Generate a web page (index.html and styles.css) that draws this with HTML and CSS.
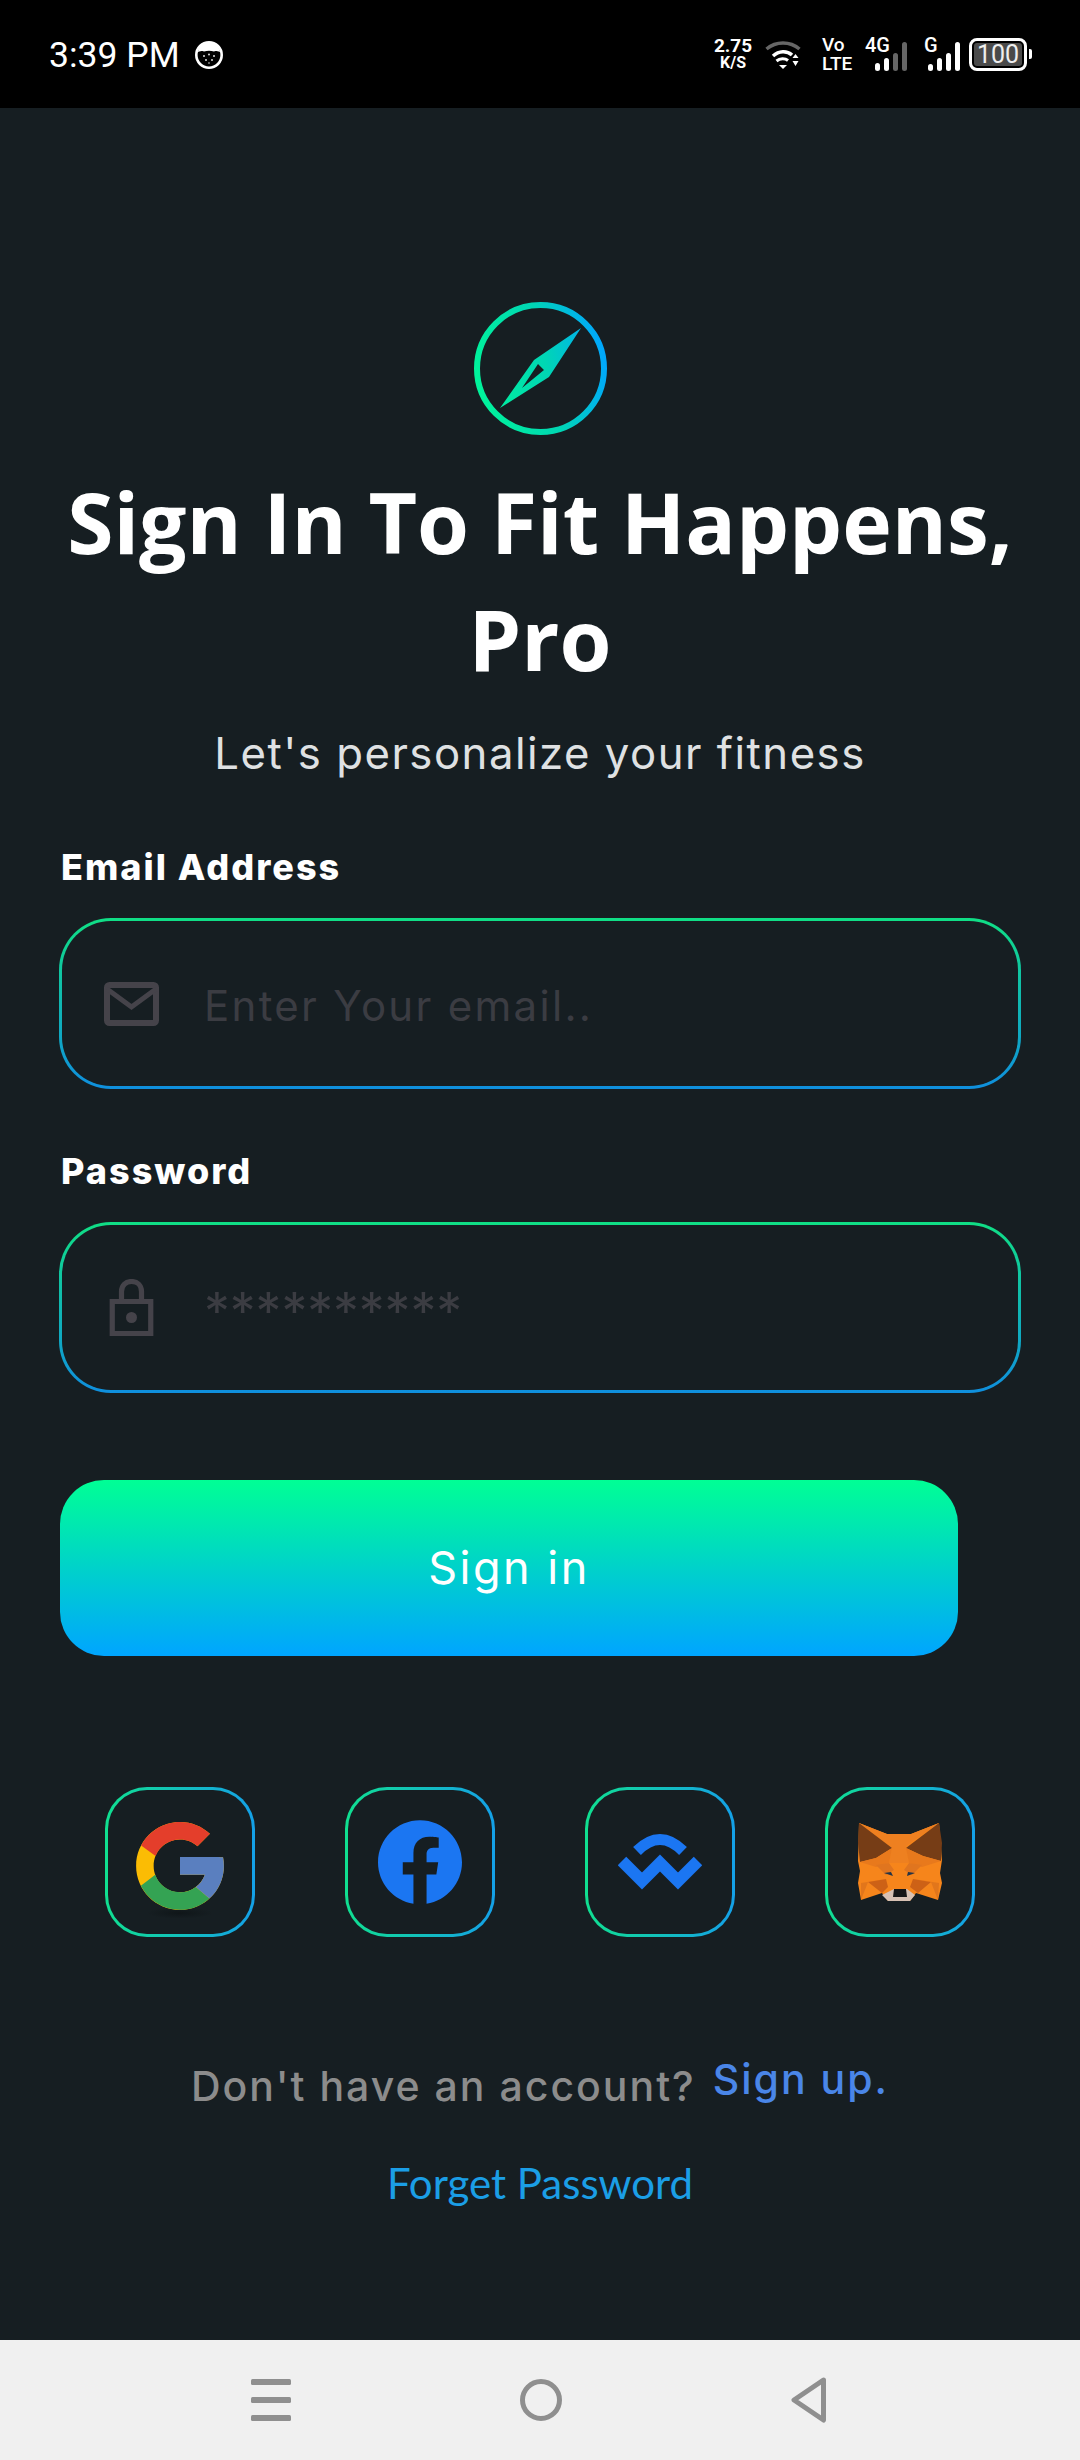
FILE: index.html
```html
<!DOCTYPE html>
<html lang="en">
<head>
<meta charset="utf-8">
<title>Sign In To Fit Happens, Pro</title>
<link rel="stylesheet" href="styles.css">
</head>
<body>
<div class="screen">
  <header class="status">
    <div class="status-left">
      <span class="time">3:39 PM</span>
      <svg class="face" width="28" height="28" viewBox="0 0 28 28"><circle cx="14" cy="14" r="12.700" fill="#000" stroke="#fff" stroke-width="2.600"/><path d="M3 11C4 4 9 1.500 14 1.500s10 2.500 11 9.500c-3-1-5-1.500-6-.5-3-1-7-1-10 0-1-1-3-.5-6 .5z" fill="#fff"/><g fill="#ddd"><circle cx="9" cy="15" r="1"/><circle cx="14" cy="13.500" r="1"/><circle cx="19" cy="15" r="1"/><circle cx="11" cy="19" r="1"/><circle cx="17" cy="19" r="1"/><circle cx="14" cy="22" r=".8"/></g></svg>
    </div>
    <div class="status-right">
      <div class="speed"><span class="speed-top">2.75</span><span class="speed-unit">K/S</span></div>
      <svg class="wifi" width="36" height="29" viewBox="0 0 36 29"><path d="M1.500 9C11 1 25 1 34.500 9" fill="none" stroke="#666" stroke-width="3.500"/><path d="M8 16C14 10.500 22 10.500 27 15" fill="none" stroke="#fff" stroke-width="3.500"/><path d="M11.500 21C15 18 20 18 23 20.500" fill="none" stroke="#fff" stroke-width="3"/><path d="M14 25h8l-4 4z" fill="#fff"/><path d="M27.500 18l3-4 3 4zM27.500 21h6l-3 5z" fill="#fff"/></svg>
      <div class="volte"><span>Vo</span><span>LTE</span></div>
      <div class="signal signal-a">
        <span class="net">4G</span>
        <svg width="32" height="29" viewBox="0 0 32 29"><rect x="0" y="21" width="5" height="8" rx="2.500" fill="#fff"/><rect x="9" y="16" width="5" height="13" rx="2.500" fill="#fff"/><rect x="18" y="11" width="5" height="18" rx="2.500" fill="#666"/><rect x="27" y="0" width="5" height="29" rx="2.500" fill="#666"/></svg>
      </div>
      <div class="signal signal-b">
        <span class="net">G</span>
        <svg width="32" height="29" viewBox="0 0 32 29"><rect x="0" y="22" width="5" height="7" rx="2.500" fill="#fff"/><rect x="9" y="16" width="5" height="13" rx="2.500" fill="#fff"/><rect x="18" y="11" width="5" height="18" rx="2.500" fill="#fff"/><rect x="27" y="0" width="5" height="29" rx="2.500" fill="#fff"/></svg>
      </div>
      <div class="battery"><span class="battery-body"><span class="battery-level">100</span></span><span class="battery-cap"></span></div>
    </div>
  </header>

  <main class="main">
    <svg class="logo" width="133" height="133" viewBox="0 0 133 133">
      <defs>
        <linearGradient id="lg" gradientUnits="userSpaceOnUse" x1="0" y1="85" x2="133" y2="55"><stop offset="0" stop-color="#00f59a"/><stop offset=".55" stop-color="#00d6b4"/><stop offset="1" stop-color="#00a6ff"/></linearGradient>
      </defs>
      <circle cx="66.500" cy="66.500" r="63.500" fill="none" stroke="url(#lg)" stroke-width="6"/>
      <path fill-rule="evenodd" d="M107 26L75 75L26 106L60 58zM64 62L70 68L48 86z" fill="url(#lg)"/>
    </svg>
    <h1 class="title">Sign In To Fit Happens,<br>Pro</h1>
    <p class="subtitle">Let's personalize your fitness</p>

    <form class="form">
      <div class="label">Email Address</div>
      <div class="field">
        <svg class="field-icon" width="55" height="44" viewBox="0 0 55 44"><rect x="3" y="3" width="49" height="38" rx="2.500" fill="none" stroke="#45434a" stroke-width="6"/><path d="M3 7L27.500 25L52 7" fill="none" stroke="#45434a" stroke-width="5"/></svg>
        <span class="placeholder">Enter Your email..</span>
      </div>
      <div class="label label-pass">Password</div>
      <div class="field">
        <svg class="field-icon" width="55" height="57" viewBox="0 0 55 57"><path d="M8.250 22.500h38.500v32H8.250zM17.500 22V12.500C17.500 6 22 2.500 27.500 2.500S37.500 6 37.500 12.500V22" fill="none" stroke="#45434a" stroke-width="5.200"/><circle cx="27.500" cy="38.500" r="5.500" fill="#45434a"/></svg>
        <span class="placeholder placeholder-pass">**********</span>
      </div>
      <button class="submit" type="button">Sign in</button>
    </form>

    <div class="socials">
      <div class="social">
        <svg class="google" width="88" height="90" viewBox="4 4 40 41">
          <defs><radialGradient id="sh"><stop offset="0" stop-color="#0b1012" stop-opacity=".6"/><stop offset="1" stop-color="#0b1012" stop-opacity="0"/></radialGradient></defs>
          <ellipse cx="24" cy="45.500" rx="15" ry="2.500" fill="url(#sh)"/>
          <path fill="#fbbc04" d="M43.611 20.083H42V20H24v8h11.303c-1.649 4.657-6.080 8-11.303 8-6.627 0-12-5.373-12-12s5.373-12 12-12c3.059 0 5.842 1.154 7.961 3.039l5.657-5.657C34.046 6.053 29.268 4 24 4 12.955 4 4 12.955 4 24s8.955 20 20 20 20-8.955 20-20c0-1.341-.138-2.650-.389-3.917z"/>
          <path fill="#e43e2b" d="M6.306 14.691l6.571 4.819C14.655 15.108 18.961 12 24 12c3.059 0 5.842 1.154 7.961 3.039l5.657-5.657C34.046 6.053 29.268 4 24 4 16.318 4 9.656 8.337 6.306 14.691z"/>
          <path fill="#34a353" d="M24 44c5.166 0 9.860-1.977 13.409-5.192l-6.190-5.238A11.910 11.910 0 0 1 24 36c-5.202 0-9.619-3.317-11.283-7.946l-6.522 5.025C9.505 39.556 16.227 44 24 44z"/>
          <path fill="#5a7fbf" d="M43.611 20.083H42V20H24v8h11.303a12.040 12.040 0 0 1-4.087 5.571l6.193 5.238C36.971 39.205 44 34 44 24c0-1.341-.138-2.650-.389-3.917z"/>
        </svg>
      </div>
      <div class="social">
        <svg width="84" height="84" viewBox="0 0 24 24"><path fill="#1b76f2" d="M24 12.073c0-6.627-5.373-12-12-12s-12 5.373-12 12c0 5.990 4.388 10.954 10.125 11.854v-8.385H7.078v-3.470h3.047V9.430c0-3.007 1.792-4.669 4.533-4.669 1.312 0 2.686.235 2.686.235v2.953H15.830c-1.491 0-1.956.925-1.956 1.874v2.250h3.328l-.532 3.470h-2.796v8.385C19.612 23.027 24 18.062 24 12.073z"/></svg>
      </div>
      <div class="social">
        <svg width="84" height="56" viewBox="0 0 84 56"><path d="M19 17Q42 -6 65 17" fill="none" stroke="#1b76f2" stroke-width="11"/><path d="M4 27L24 47L42 29L60 47L80 27" fill="none" stroke="#1b76f2" stroke-width="12"/></svg>
      </div>
      <div class="social">
        <svg width="84" height="79" viewBox="0 0 84 79">
          <path fill="#f6851b" d="M1 0L29 11H53L81 0L84 37L82 50L84 60L80 77L58 70L52 78H30L24 70L3 77L0 60L2 48L0 38z"/>
          <path fill="#ee8020" d="M1 0L29 11L34 25zM81 0L53 11L48 23zM29 11H53L48 23L51 40H31L34 25z"/>
          <path fill="#763d16" d="M1 0L34 25L18 35L2 39L0 20zM81 0L48 25L65 33L83 38L84 20z"/>
          <path fill="#e8791c" d="M18 35L34 25L31 40L18 44L2 39zM65 33L48 25L51 40L64 44L83 38z"/>
          <path fill="#e0751f" d="M18 42L31 40L36 47L28 52zM64 42L51 40L46 47L54 52z"/>
          <path fill="#233447" d="M26 50L33 49L35 53zM49 53L50 49L57 50z"/>
          <path fill="#cd6116" d="M24 70L10 59L28 56L30 64zM60 70L73 59L55 56L52 64z"/>
          <path fill="#e2761b" d="M3 60L28 56L10 59L3 77zM81 60L55 56L73 59L80 77z"/>
          <path fill="#d7c1b3" d="M24 72L36 66H49L57 72L52 78H30z"/>
          <path fill="#161616" d="M36 66H48L49 74H35z"/>
        </svg>
      </div>
    </div>

    <p class="signup"><span class="signup-text">Don't have an account?</span> <a class="signup-link">Sign up.</a></p>
    <a class="forgot">Forget Password</a>
  </main>

  <nav class="nav">
    <svg width="40" height="42" viewBox="0 0 40 42"><rect x="0" y="0" width="40" height="6" rx="1.500" fill="#8f8f8f"/><rect x="0" y="18" width="40" height="6" rx="1.500" fill="#8f8f8f"/><rect x="0" y="36" width="40" height="6" rx="1.500" fill="#8f8f8f"/></svg>
    <svg width="42" height="42" viewBox="0 0 42 42"><circle cx="21" cy="21" r="18.500" fill="none" stroke="#8f8f8f" stroke-width="5"/></svg>
    <svg width="36" height="46" viewBox="0 0 36 46"><path d="M32.500 3L3 23L32.500 43z" fill="none" stroke="#8f8f8f" stroke-width="5" stroke-linejoin="round"/></svg>
  </nav>
</div>
</body>
</html>
```

FILE: styles.css
```css
* { box-sizing: border-box; }
html, body { margin: 0; padding: 0; }
body { background: #161e22; }
.screen { width: 1080px; height: 2460px; display: flex; flex-direction: column; overflow: hidden; }

.status { flex: none; height: 108px; background: #000; display: flex; justify-content: space-between; padding: 0 48px 0 49px; color: #fff; font-family: Roboto, sans-serif; }
.status-left { display: flex; align-items: center; gap: 15px; padding-top: 1px; }
.time { font-size: 35.500px; line-height: 40px; }
.status-right { display: flex; align-items: center; }
.speed { display: flex; flex-direction: column; align-items: center; width: 38px; font-weight: 700; line-height: 17px; }
.speed-top { font-size: 19px; }
.speed-unit { font-size: 16px; }
.wifi { margin-left: 13px; margin-top: 1px; }
.volte { display: flex; flex-direction: column; margin-left: 21px; width: 30px; font-size: 19px; font-weight: 500; line-height: 19px; }
.signal { position: relative; width: 32px; height: 34px; display: flex; align-items: flex-end; }
.signal-a { margin-left: 23px; }
.signal-b { margin-left: 21px; }
.net { position: absolute; left: -10px; top: -1px; font-size: 20px; font-weight: 500; line-height: 18px; }
.signal-b .net { left: -4px; }
.battery { display: flex; align-items: center; margin-left: 9px; gap: 2px; }
.battery-body { width: 58px; height: 33px; border: 3px solid #fff; border-radius: 8px; padding: 2px; display: flex; }
.battery-level { flex: 1; background: #4a4a4a; border-radius: 3px; font-size: 25px; line-height: 23px; text-align: center; color: #eee; }
.battery-cap { width: 3px; height: 10px; background: #fff; border-radius: 0 2px 2px 0; }

.main { flex: 1; display: flex; flex-direction: column; align-items: center; padding-top: 194px; background: #161e22; }
.logo { display: block; flex: none; }
.title { margin: 28px 0 0; font: 700 84px/117px "Open Sans", sans-serif; color: #fff; text-align: center; white-space: nowrap; }
.subtitle { margin: 27px 0 0; font: 400 43.700px/60px Inter, sans-serif; letter-spacing: 1.500px; color: #dfe1e3; white-space: nowrap; }

.form { align-self: stretch; padding: 0 59px; display: flex; flex-direction: column; margin-top: 60px; }
.label { margin-left: 2px; font: 800 36px/46px Inter, sans-serif; letter-spacing: 2px; color: #fff; }
.label-pass { margin-top: 59px; }
.field { margin-top: 28px; height: 171px; border: 3px solid transparent; border-radius: 52px; background: linear-gradient(#161e22, #161e22) padding-box, linear-gradient(180deg, #10df85, #0f8fde) border-box; display: flex; align-items: center; padding-left: 42px; gap: 45px; }
.field-icon { flex: none; }
.placeholder { font: 400 42px/60px Inter, sans-serif; color: #3b3c42; letter-spacing: 2.300px; white-space: nowrap; padding-top: 5px; }
.placeholder-pass { font-size: 51.500px; letter-spacing: 0; padding: 7px 0 0; }
.submit { display: block; margin: 87px 0 0 1px; width: 898px; height: 176px; border: 0; border-radius: 44px; background: linear-gradient(180deg, #00ff95, #00a5ff); color: #fff; font: 400 45px/60px Inter, sans-serif; letter-spacing: 2.500px; }

.socials { display: flex; gap: 90px; margin-top: 131px; }
.social { width: 150px; height: 150px; border: 3px solid transparent; border-radius: 42px; background: linear-gradient(#161e22, #161e22) padding-box, linear-gradient(90deg, #10e090, #14a0e8) border-box; display: flex; align-items: center; justify-content: center; }
.google { overflow: visible; margin-top: 10px; }

.signup { margin: 114px 0 0; display: flex; align-items: flex-start; gap: 17px; font-family: Inter, sans-serif; white-space: nowrap; }
.signup-text { font-size: 41px; font-weight: 500; line-height: 56px; color: #8c8c8c; letter-spacing: 2px; padding-top: 7px; }
.signup-link { font-size: 41px; line-height: 56px; font-weight: 500; color: #4a86e8; letter-spacing: 2px; }
.forgot { margin-top: 41px; font: 400 42px/56px Lato, sans-serif; color: #1b9ee6; white-space: nowrap; }

.nav { flex: none; height: 120px; background: #f0f0f0; display: flex; align-items: center; justify-content: center; gap: 229px; padding-right: 3px; }
```
